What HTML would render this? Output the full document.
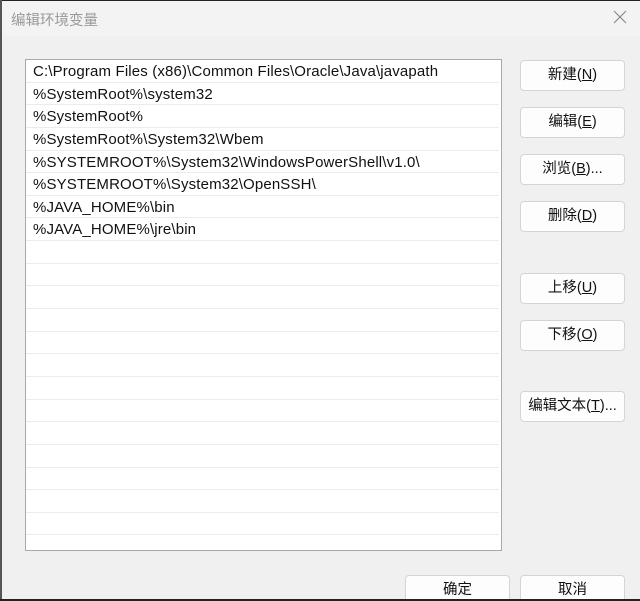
<!DOCTYPE html>
<html><head><meta charset="utf-8"><style>
*{margin:0;padding:0;box-sizing:border-box}
html,body{width:640px;height:601px;overflow:hidden}
body{background:#f0f0f0;font-family:"Liberation Sans","Noto Sans CJK SC",sans-serif;position:relative}
.title{position:absolute;left:0;top:0;width:640px;height:36px;background:#f3f3f3;border-top:1px solid #222}
.title span{position:absolute;left:11px;top:8px;font-size:14.5px;color:#9a9a9a}
.x{position:absolute;left:612px;top:8px;width:16px;height:16px}
.lb{position:absolute;left:0;top:0;width:2px;height:601px;background:#555}
.bb{position:absolute;left:0;top:599px;width:640px;height:2px;background:#222}
.list{position:absolute;left:25px;top:59px;width:477px;height:492px;background:#fff;border:1px solid #a8a8a8;overflow:hidden}
.row{height:22.65px;border-bottom:1px solid #ececec;font-size:15px;letter-spacing:0.15px;line-height:23px;padding-left:7px;color:#111;white-space:nowrap;margin-right:2px}
.btn{position:absolute;left:520px;width:105px;height:31px;background:#fdfdfd;border:1px solid #d4d4d4;border-radius:4px;font-size:14.5px;text-align:center;line-height:29px;color:#111}
u{text-decoration:underline}
</style></head><body>
<div class="title"><span>编辑环境变量</span>
<svg class="x" viewBox="0 0 16 16"><path d="M2 2L14 14M14 2L2 14" stroke="#888" stroke-width="1.2"/></svg></div>
<div class="list">
<div class="row">C:\Program Files (x86)\Common Files\Oracle\Java\javapath</div>
<div class="row">%SystemRoot%\system32</div>
<div class="row">%SystemRoot%</div>
<div class="row">%SystemRoot%\System32\Wbem</div>
<div class="row">%SYSTEMROOT%\System32\WindowsPowerShell\v1.0\</div>
<div class="row">%SYSTEMROOT%\System32\OpenSSH\</div>
<div class="row">%JAVA_HOME%\bin</div>
<div class="row">%JAVA_HOME%\jre\bin</div>
<div class="row"></div><div class="row"></div><div class="row"></div><div class="row"></div><div class="row"></div><div class="row"></div><div class="row"></div><div class="row"></div><div class="row"></div><div class="row"></div><div class="row"></div><div class="row"></div><div class="row"></div><div class="row"></div>
</div>
<div class="btn" style="top:60px">新建(<u>N</u>)</div>
<div class="btn" style="top:107px">编辑(<u>E</u>)</div>
<div class="btn" style="top:154px">浏览(<u>B</u>)...</div>
<div class="btn" style="top:201px">删除(<u>D</u>)</div>
<div class="btn" style="top:273px">上移(<u>U</u>)</div>
<div class="btn" style="top:320px">下移(<u>O</u>)</div>
<div class="btn" style="top:391px">编辑文本(<u>T</u>)...</div>
<div class="btn" style="top:575px;left:405px">确定</div>
<div class="btn" style="top:575px">取消</div>
<div class="lb"></div><div class="bb"></div>
</body></html>
